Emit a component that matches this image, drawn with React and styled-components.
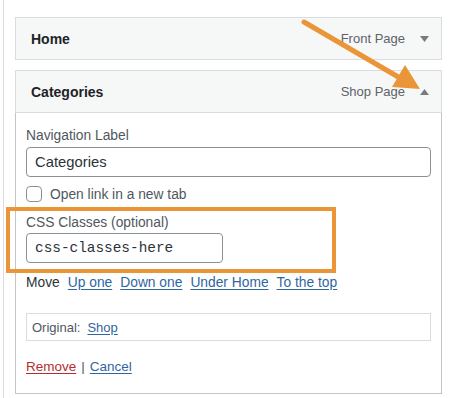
import React from "react";
import styled, { createGlobalStyle } from "styled-components";

const Global = createGlobalStyle`
  html, body { margin: 0; padding: 0; background: #ffffff; }
  body { font-family: "Liberation Sans", Arial, sans-serif; color: #2c3338; }
`;

const Stage = styled.div`
  position: relative;
  width: 474px;
  height: 398px;
  overflow: hidden;
`;

const Column = styled.div`
  margin-left: 3px;
  border-left: 1px solid #dcdcde;
  height: 398px;
  box-sizing: border-box;
  padding: 17px 0 0 11px;
  display: flex;
  flex-direction: column;
  gap: 10px;
`;

const Item = styled.div`
  width: 427px;
  display: flex;
  flex-direction: column;
`;

const Header = styled.div`
  box-sizing: border-box;
  height: 43px;
  background: #f6f7f7;
  border: 1px solid #dcdcde;
  display: flex;
  align-items: center;
  padding: 0 12px 0 15px;
`;

const Title = styled.div`
  flex: 1;
  font-size: 14px;
  font-weight: 700;
  color: #1d2327;
`;

const Type = styled.div`
  font-size: 13px;
  color: #5c6369;
  margin-right: 15px;
`;

const Toggle = styled.svg`
  width: 9px;
  height: 6px;
  display: block;
`;

const Body = styled.div`
  box-sizing: border-box;
  height: 281px;
  border: 1px solid #c3c4c7;
  border-top: none;
  padding: 14px 10px 0 10px;
  display: flex;
  flex-direction: column;
  align-items: flex-start;
`;

const Label = styled.div`
  font-size: 13.8px;
  line-height: 18px;
  color: #50575e;
  margin-top: ${(p) => p.$mt || 0}px;
`;

const Input = styled.div`
  box-sizing: border-box;
  height: 30px;
  width: ${(p) => p.$w || "100%"};
  margin-top: ${(p) => p.$mt || 0}px;
  border: 1px solid #8c8f94;
  border-radius: 4px;
  background: #fff;
  display: flex;
  align-items: center;
  padding-left: 8px;
  font-size: ${(p) => (p.$mono ? "14.4px" : "14.8px")};
  font-family: ${(p) =>
    p.$mono ? '"Liberation Mono", "DejaVu Sans Mono", monospace' : '"Liberation Sans", Arial, sans-serif'};
  color: #2c3338;
`;

const CheckRow = styled.label`
  display: flex;
  align-items: center;
  margin-top: 9px;
  height: 16px;
  font-size: 13.8px;
  color: #50575e;
`;

const Box = styled.span`
  box-sizing: border-box;
  width: 16px;
  height: 16px;
  border: 1px solid #8c8f94;
  border-radius: 4px;
  background: #fff;
  margin-right: 8px;
`;

const MoveRow = styled.div`
  display: flex;
  gap: 8px;
  margin-top: 11px;
  font-size: 13.8px;
  line-height: 18px;
  color: #2c3338;
`;

const Link = styled.a`
  color: ${(p) => (p.$danger ? "#b32d2e" : "#2f66a2")};
  text-decoration: underline;
  text-underline-offset: 2px;
  cursor: pointer;
`;

const Original = styled.div`
  box-sizing: border-box;
  margin-top: 21px;
  width: 100%;
  height: 28px;
  border: 1px solid #dcdcde;
  display: flex;
  align-items: center;
  padding-left: 5px;
  gap: 7px;
  font-size: 13px;
  color: #50575e;
`;

const Actions = styled.div`
  margin-top: 17px;
  font-size: 13.5px;
  line-height: 18px;
  color: #50575e;
  display: flex;
  gap: 5px;
`;

const Highlight = styled.div`
  position: absolute;
  left: 6px;
  top: 207px;
  width: 330px;
  height: 66px;
  box-sizing: border-box;
  border: 4.5px solid #ea9638;
  pointer-events: none;
`;

const Arrow = styled.svg`
  position: absolute;
  left: 0;
  top: 0;
  pointer-events: none;
`;

const Caret = ({ up }) => (
  <Toggle viewBox="0 0 9 6">
    <path d={up ? "M0 6 L4.5 0 L9 6 Z" : "M0 0 L9 0 L4.5 6 Z"} fill="#787c82" />
  </Toggle>
);

export default function App() {
  return (
    <Stage>
      <Global />
      <Column>
        <Item>
          <Header>
            <Title>Home</Title>
            <Type>Front Page</Type>
            <Caret />
          </Header>
        </Item>
        <Item>
          <Header>
            <Title>Categories</Title>
            <Type>Shop Page</Type>
            <Caret up />
          </Header>
          <Body>
            <Label>Navigation Label</Label>
            <Input $mt={2}>Categories</Input>
            <CheckRow>
              <Box />
              Open link in a new tab
            </CheckRow>
            <Label $mt={12}>CSS Classes (optional)</Label>
            <Input $mt={1} $w="197px" $mono>
              css-classes-here
            </Input>
            <MoveRow>
              <span>Move</span>
              <Link>Up one</Link>
              <Link>Down one</Link>
              <Link>Under Home</Link>
              <Link>To the top</Link>
            </MoveRow>
            <Original>
              <span>Original:</span>
              <Link>Shop</Link>
            </Original>
            <Actions>
              <Link $danger>Remove</Link>
              <span>|</span>
              <Link>Cancel</Link>
            </Actions>
          </Body>
        </Item>
      </Column>
      <Highlight />
      <Arrow width="474" height="398" viewBox="0 0 474 398">
        <line x1="304" y1="22" x2="400" y2="78" stroke="#ea9638" strokeWidth="5" strokeLinecap="round" />
        <polygon points="405,65 392,87 420,89" fill="#ea9638" />
      </Arrow>
    </Stage>
  );
}
